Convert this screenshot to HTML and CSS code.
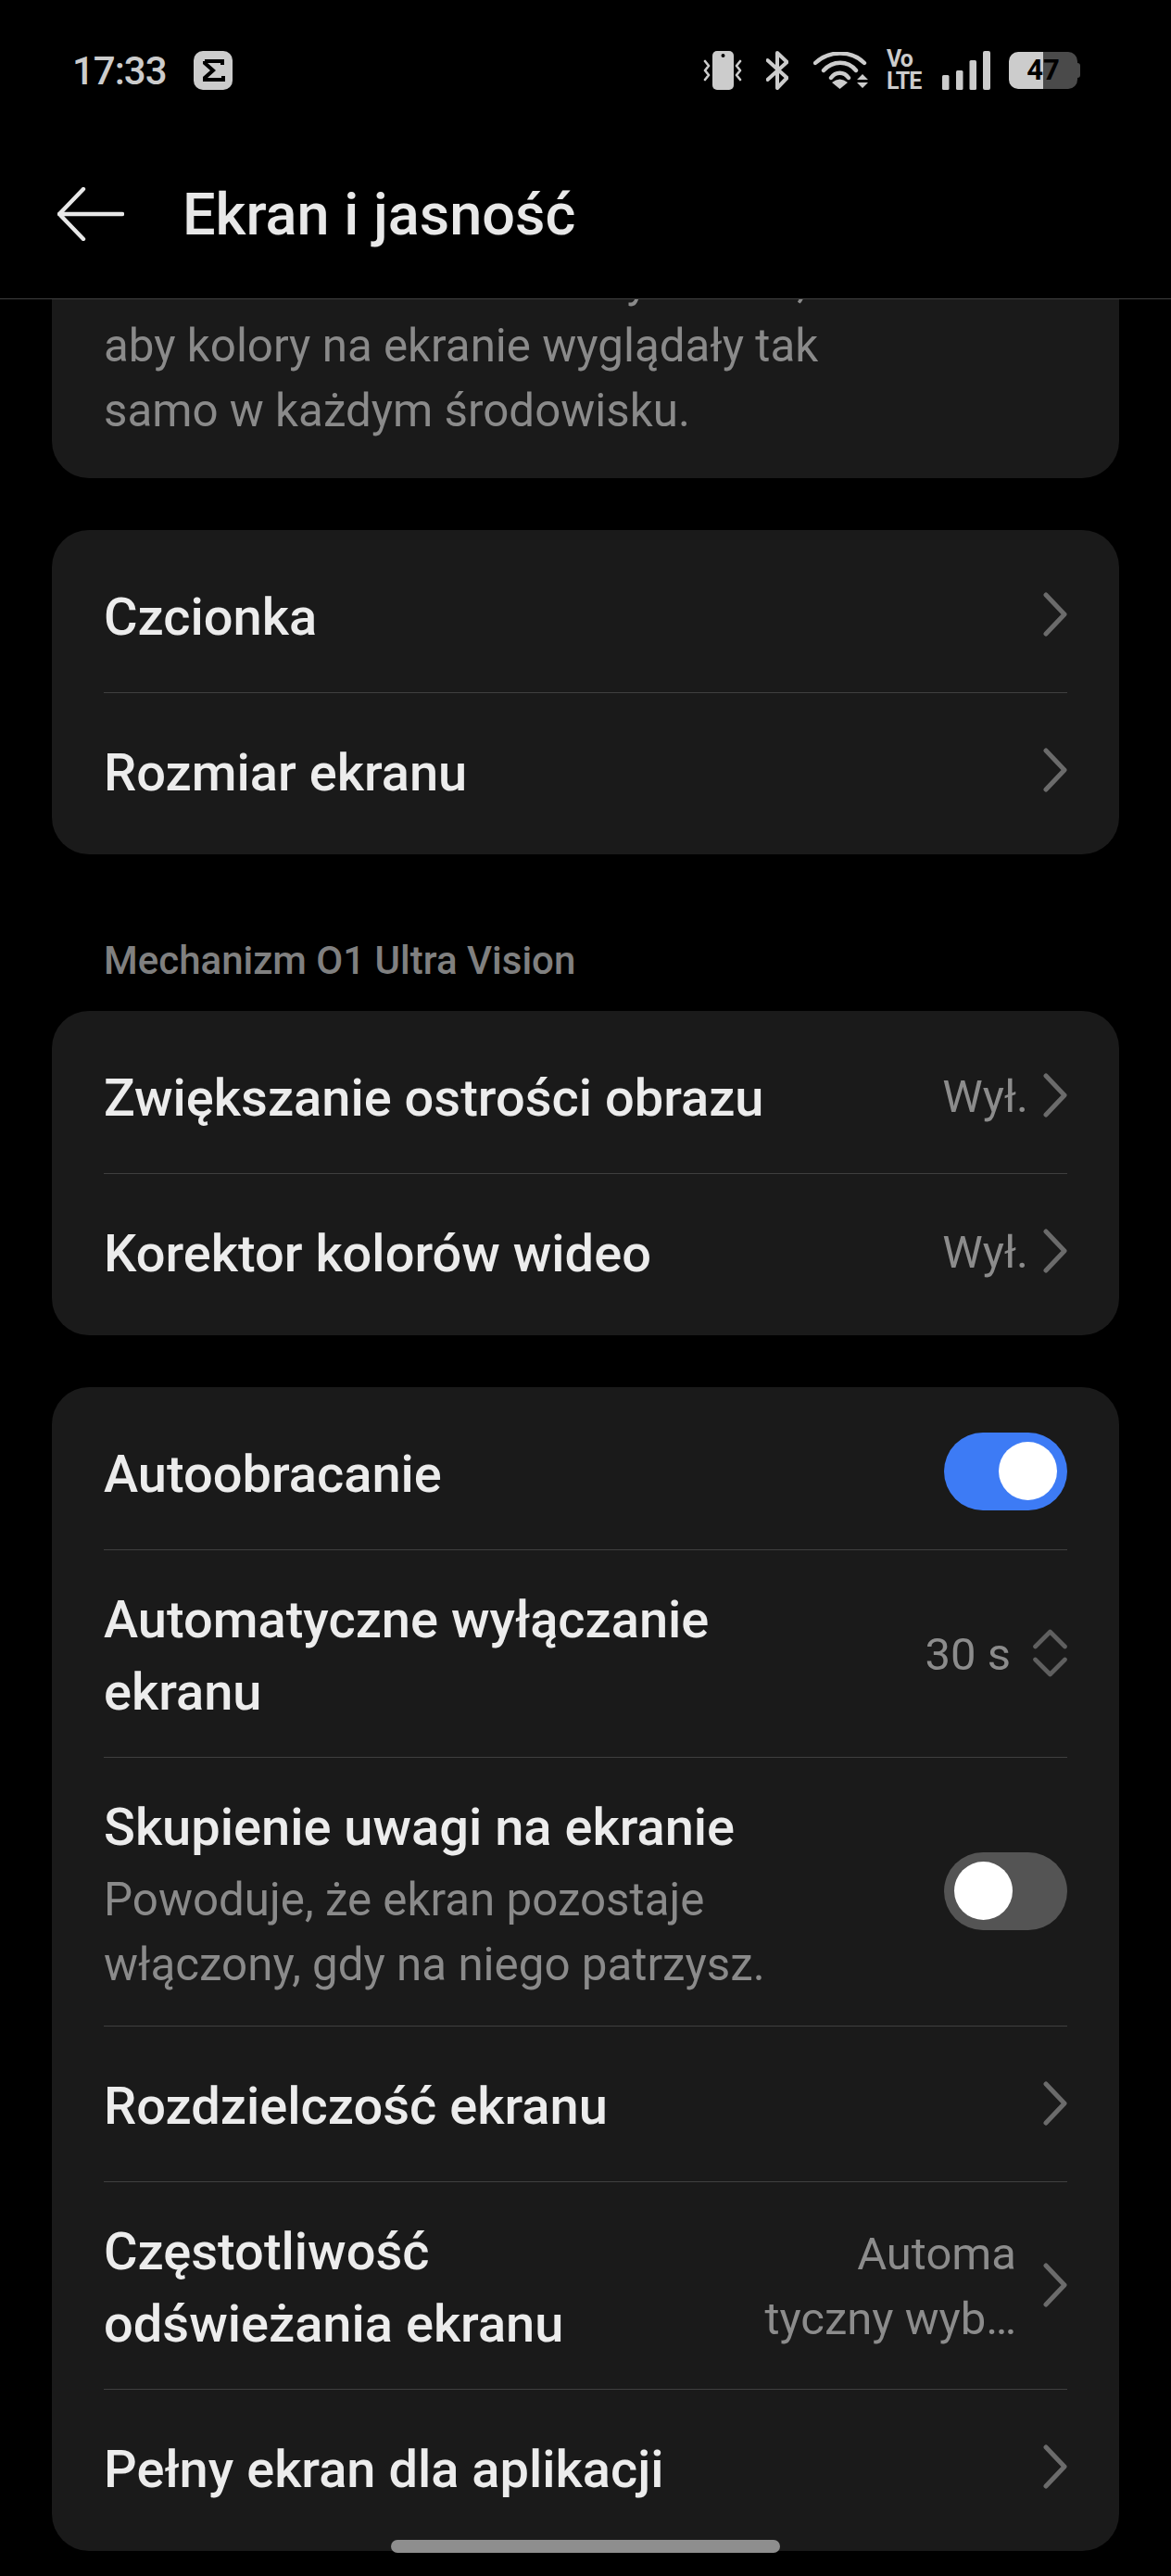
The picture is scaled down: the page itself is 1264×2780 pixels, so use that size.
FILE: index.html
```html
<!DOCTYPE html>
<html lang="pl">
    <head>
        <meta charset="utf-8">
        <meta name="viewport" content="width=device-width, initial-scale=1.0">
        <title>Ekran i jasność</title>
        <link rel="stylesheet" href="styles.css">
    </head>
    <body>
        <div class="topbar">
            <div class="status">
                <span class="time">17:33</span>
                <svg class="sigma" width="42" height="42" viewBox="0 0 42 42"><rect width="42" height="42" rx="10" fill="#ccc"/><path d="M12 11H31V15M12 11V13L21 21L12 29V31H32V27" fill="none" stroke="#000" stroke-width="4"/></svg>
                <div class="status-icons">
                    <svg class="ic-vibrate" width="46" height="44" viewBox="0 0 46 44"><rect x="12" y="1" width="23" height="42" rx="5" fill="#ccc"/><circle cx="23.5" cy="6" r="2" fill="#000"/><path d="M4 12L8 17L4 22L8 27L4 32M42 12L38 17L42 22L38 27L42 32" fill="none" stroke="#ccc" stroke-width="2.6" stroke-linecap="round" stroke-linejoin="round"/></svg>
                    <svg class="ic-bt" width="24" height="42" viewBox="0 0 24 42"><path d="M1.5 10L22.5 29L12 40V2L22.5 12L1.5 31" fill="none" stroke="#ccc" stroke-width="4" stroke-linecap="round" stroke-linejoin="round"/></svg>
                    <svg class="ic-wifi" width="60" height="40" viewBox="0 0 60 40"><path d="M2 12C17 -2 41 -2 55 12M11 20C21 9 37 9 46 20M19 28C24 21 33 21 38 28" fill="none" stroke="#ccc" stroke-width="4.4" stroke-linecap="round"/><path d="M20 33Q28.5 26 37 33L28.5 40Z" fill="#ccc"/><path d="M47 30L53 24L59 30ZM47 33H59L53 39Z" fill="#ccc"/></svg>
                    <div class="volte"><span>Vo</span><span>LTE</span></div>
                    <svg class="ic-signal" width="52" height="42" viewBox="0 0 52 42"><rect y="26" width="7.5" height="16" rx="1.5" fill="#ccc"/><rect x="15" y="21" width="7.5" height="21" rx="1.5" fill="#ccc"/><rect x="29.5" y="10" width="7.5" height="32" rx="1.5" fill="#ccc"/><rect x="44" width="8" height="42" rx="2" fill="#ccc"/></svg>
                    <div class="battery">47</div>
                </div>
            </div>
            <div class="titlebar">
                <svg class="back" width="72" height="58" viewBox="0 0 72 58"><path d="M28 2L2 29L28 56M2 29H70" fill="none" stroke="#e8e8e8" stroke-width="4.4" stroke-linecap="round" stroke-linejoin="round"/></svg>
                <h1>Ekran i jasność</h1>
            </div>
        </div>

        <div class="content">
            <div class="card card-cut">
                <p class="sub">Zmienia ton i odcień barwy ekranu,<br>aby kolory na ekranie wyglądały tak<br>samo w każdym środowisku.</p>
            </div>

            <div class="card">
                <div class="row">
                    <span class="name">Czcionka</span>
                    <svg class="chev" width="26" height="48" viewBox="0 0 26 48"><path d="M3 3L23 24L3 45" fill="none" stroke="#6b6b6b" stroke-width="5" stroke-linecap="round" stroke-linejoin="round"/></svg>
                </div>
                <div class="row">
                    <span class="name">Rozmiar ekranu</span>
                    <svg class="chev" width="26" height="48" viewBox="0 0 26 48"><path d="M3 3L23 24L3 45" fill="none" stroke="#6b6b6b" stroke-width="5" stroke-linecap="round" stroke-linejoin="round"/></svg>
                </div>
            </div>

            <h2 class="label">Mechanizm O1 Ultra Vision</h2>

            <div class="card">
                <div class="row">
                    <span class="name">Zwiększanie ostrości obrazu</span>
                    <span class="value">Wył.</span>
                    <svg class="chev" width="26" height="48" viewBox="0 0 26 48"><path d="M3 3L23 24L3 45" fill="none" stroke="#6b6b6b" stroke-width="5" stroke-linecap="round" stroke-linejoin="round"/></svg>
                </div>
                <div class="row">
                    <span class="name">Korektor kolorów wideo</span>
                    <span class="value">Wył.</span>
                    <svg class="chev" width="26" height="48" viewBox="0 0 26 48"><path d="M3 3L23 24L3 45" fill="none" stroke="#6b6b6b" stroke-width="5" stroke-linecap="round" stroke-linejoin="round"/></svg>
                </div>
            </div>

            <div class="card">
                <div class="row">
                    <span class="name">Autoobracanie</span>
                    <span class="toggle toggle-on"></span>
                </div>
                <div class="row">
                    <span class="name">Automatyczne wyłączanie<br>ekranu</span>
                    <span class="value value-wide">30 s</span>
                    <svg class="updown" width="37" height="52" viewBox="0 0 37 52"><path d="M2.5 19L18.5 3L34.5 19M2.5 33L18.5 49L34.5 33" fill="none" stroke="#5f5f5f" stroke-width="4.6" stroke-linecap="round" stroke-linejoin="round"/></svg>
                </div>
                <div class="row">
                    <div class="name">Skupienie uwagi na ekranie
                        <p class="sub">Powoduje, że ekran pozostaje<br>włączony, gdy na niego patrzysz.</p>
                    </div>
                    <span class="toggle"></span>
                </div>
                <div class="row">
                    <span class="name">Rozdzielczość ekranu</span>
                    <svg class="chev" width="26" height="48" viewBox="0 0 26 48"><path d="M3 3L23 24L3 45" fill="none" stroke="#6b6b6b" stroke-width="5" stroke-linecap="round" stroke-linejoin="round"/></svg>
                </div>
                <div class="row">
                    <span class="name">Częstotliwość<br>odświeżania ekranu</span>
                    <span class="value value-two">Automa<br>tyczny wyb…</span>
                    <svg class="chev" width="26" height="48" viewBox="0 0 26 48"><path d="M3 3L23 24L3 45" fill="none" stroke="#6b6b6b" stroke-width="5" stroke-linecap="round" stroke-linejoin="round"/></svg>
                </div>
                <div class="row">
                    <span class="name">Pełny ekran dla aplikacji</span>
                    <svg class="chev" width="26" height="48" viewBox="0 0 26 48"><path d="M3 3L23 24L3 45" fill="none" stroke="#6b6b6b" stroke-width="5" stroke-linecap="round" stroke-linejoin="round"/></svg>
                </div>
            </div>
        </div>

        <div class="home-bar"></div>
    </body>
</html>
```

FILE: styles.css
```css
* {
    box-sizing: border-box;
}
html, body {
    margin: 0;
    height: 2780px;
    overflow: hidden;
    background: #000;
    font-family: Roboto, "Noto Sans", sans-serif;
}
.topbar {
    height: 323px;
    padding-top: 54px;
    border-bottom: 1px solid #3f3f3f;
}
.status {
    display: flex;
    align-items: center;
    height: 44px;
    padding: 0 98px 0 78px;
    color: #ccc;
}
.time {
    font-size: 42px;
    font-weight: 500;
    letter-spacing: -1px;
}
.sigma {
    margin-left: 29px;
}
.status-icons {
    display: flex;
    align-items: center;
    margin-left: auto;
}
.ic-bt {
    margin-left: 24px;
}
.ic-wifi {
    margin-left: 27px;
}
.volte {
    display: flex;
    flex-direction: column;
    width: 38px;
    margin-left: 19px;
    font-size: 25px;
    font-weight: 700;
    line-height: 24px;
    letter-spacing: -1px;
}
.ic-signal {
    margin-left: 22px;
}
.battery {
    width: 74px;
    height: 40px;
    margin-left: 20px;
    margin-right: 3px;
    position: relative;
    border-radius: 10px;
    background: linear-gradient(90deg, #ccc 50%, #4a4a4a 50%);
    color: #000;
    font-size: 31px;
    font-weight: 700;
    line-height: 40px;
    text-align: center;
}
.battery:after {
    content: '';
    position: absolute;
    right: -3px;
    top: 12px;
    width: 3px;
    height: 16px;
    background: #4a4a4a;
    border-radius: 0 3px 3px 0;
}
.titlebar {
    display: flex;
    align-items: center;
    height: 58px;
    margin-top: 104px;
    padding-left: 62px;
}
h1 {
    margin: 0 0 0 63px;
    color: #e8e8e8;
    font-size: 63px;
    font-weight: 500;
}
.content {
    padding: 0 56px;
}
.card {
    margin-top: 56px;
    padding: 7px 56px;
    background: #1a1a1a;
    border-radius: 40px;
}
.card-cut {
    display: flex;
    flex-direction: column;
    justify-content: flex-end;
    height: 193px;
    margin-top: 0;
    padding: 0 56px 38px;
    border-radius: 0 0 40px 40px;
    overflow: hidden;
}
.row {
    display: flex;
    align-items: center;
    min-height: 168px;
    padding: 30px 0 31px;
    border-top: 1px solid #3f3f3f;
}
.row:first-child {
    border-top: 0;
}
.name {
    flex: 1;
    padding-top: 6px;
    color: #ececec;
    font-size: 56px;
    font-weight: 500;
    line-height: 78px;
}
.sub {
    margin: 4px 0 0;
    color: #8a8a8a;
    font-size: 49.3px;
    font-weight: 400;
    line-height: 70px;
}
.card-cut .sub {
    margin: 0;
}
.value {
    margin-right: 16px;
    padding-top: 4px;
    color: #8c8c8c;
    font-size: 49px;
    line-height: 70px;
    text-align: right;
}
.value-wide {
    margin-right: 24px;
}
.value-two {
    margin-right: 29px;
}
.label {
    margin: 87px 0 0;
    padding-left: 56px;
    color: #808080;
    font-size: 42px;
    font-weight: 500;
    line-height: 56px;
}
.label + .card {
    margin-top: 26px;
}
.toggle {
    width: 133px;
    height: 84px;
    position: relative;
    border-radius: 42px;
    background: #545454;
}
.toggle:after {
    content: '';
    position: absolute;
    left: 11px;
    top: 10px;
    width: 63px;
    height: 63px;
    border-radius: 50%;
    background: #fff;
}
.toggle-on {
    background: #3d7bf5;
}
.toggle-on:after {
    left: auto;
    right: 11px;
}
.home-bar {
    position: absolute;
    left: 422px;
    top: 2741px;
    width: 420px;
    height: 14px;
    border-radius: 7px;
    background: #8e8e8e;
}
```
